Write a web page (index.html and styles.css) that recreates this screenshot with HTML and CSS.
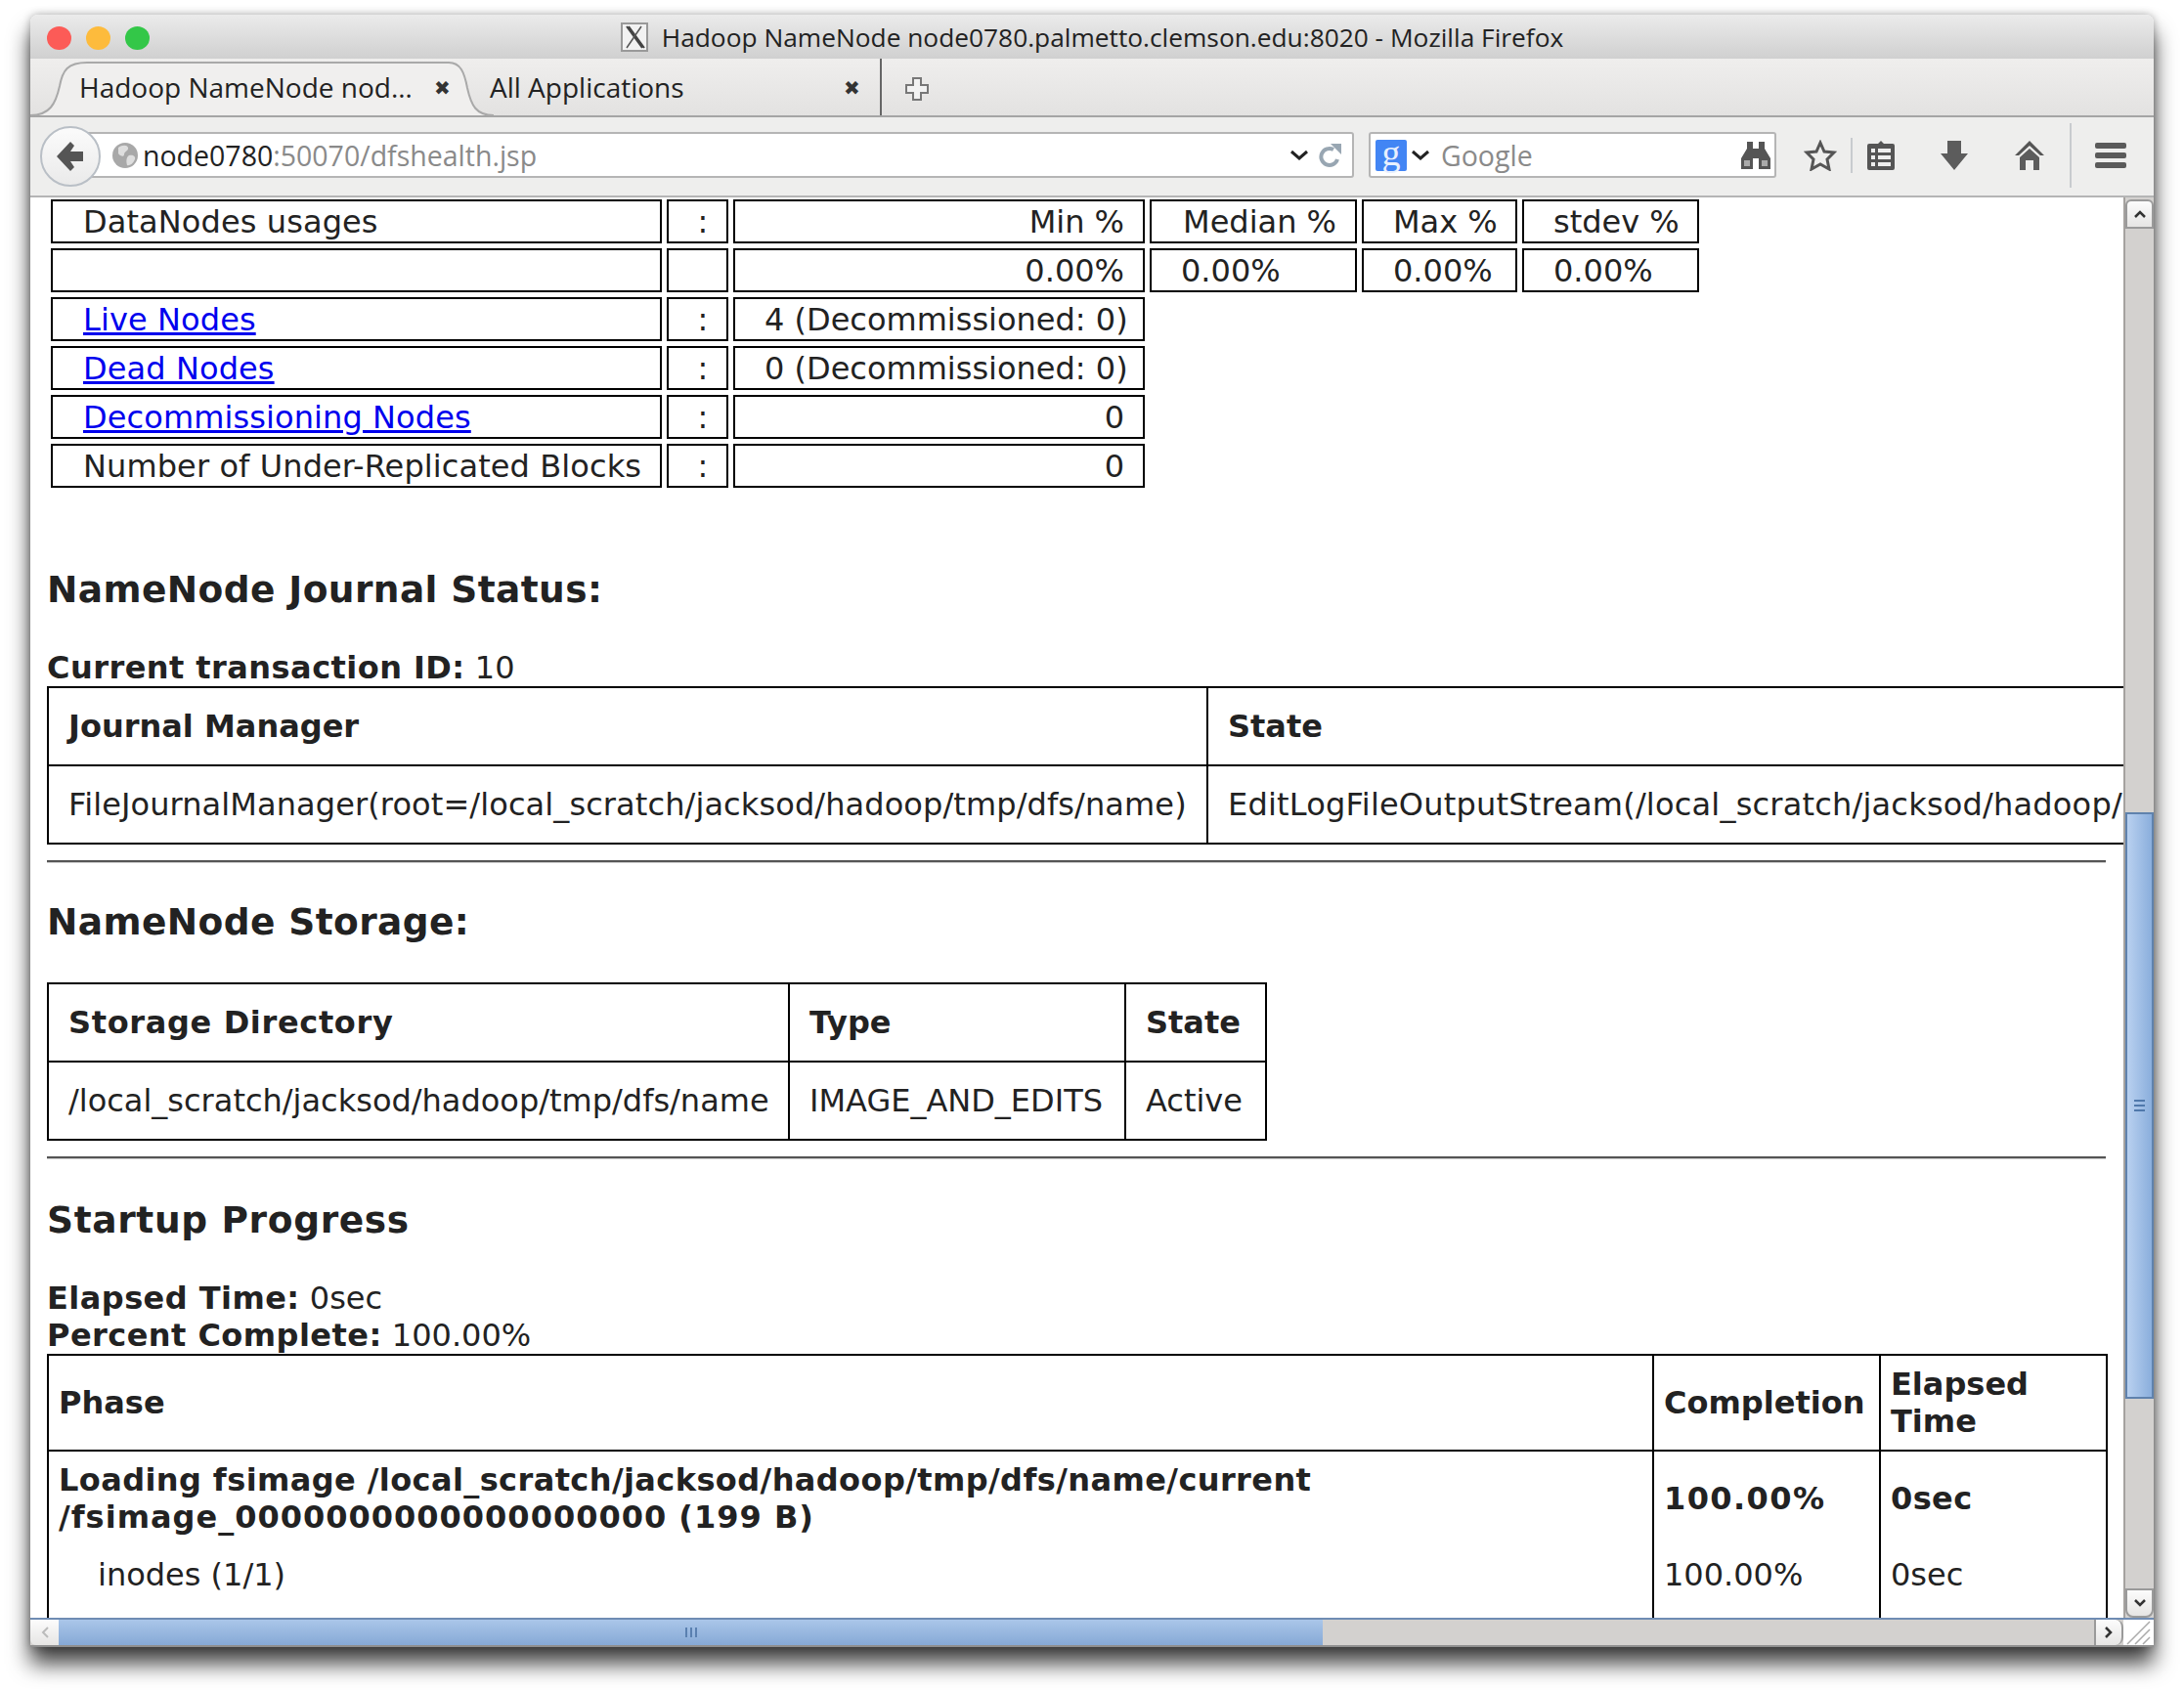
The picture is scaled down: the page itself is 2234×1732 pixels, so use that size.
FILE: index.html
```html
<!DOCTYPE html>
<html lang="en">
  <head>
    <meta charset="UTF-8" />
    <title>Hadoop NameNode node0780.palmetto.clemson.edu:8020 - Mozilla Firefox</title>
    <link rel="stylesheet" href="styles.css">
  </head>
  <body>
    <div class="window">
      <div class="titlebar">
        <div class="lights">
          <span class="light red"></span>
          <span class="light yellow"></span>
          <span class="light green"></span>
        </div>
        <svg class="x-icon" width="28" height="30" viewBox="0 0 28 30">
          <rect x="1" y="1" width="26" height="28" fill="#f2f2f2" stroke="#999" stroke-width="2" />
          <path d="M6 4 L22 26 M8 4 L24 26" stroke="#444" stroke-width="2" fill="none" />
          <path d="M21 4 L6 26" stroke="#555" stroke-width="1.5" fill="none" />
        </svg>
        <span class="title-text">Hadoop NameNode node0780.palmetto.clemson.edu:8020 - Mozilla Firefox</span>
      </div>

      <div class="tabbar">
        <div class="tab tab-active">
          <svg class="tab-bg" width="476" height="60" viewBox="0 0 476 60">
            <path d="M0 58 C20 58 26 46 30 28 C33 12 38 4 58 4 L428 4 C440 4 444 14 447 30 C451 48 456 58 474 58" fill="#f0efee" stroke="#a9a9a9" stroke-width="2" />
          </svg>
          <span class="tab-label">Hadoop NameNode nod…</span>
          <span class="tab-close">✖</span>
        </div>
        <div class="tab tab-other">
          <span class="tab-label">All Applications</span>
          <span class="tab-close">✖</span>
        </div>
        <svg class="new-tab" width="26" height="26" viewBox="0 0 26 26">
          <path d="M9 2 H17 V9 H24 V17 H17 V24 H9 V17 H2 V9 H9 Z" fill="#f2f2f2" stroke="#777" stroke-width="2" />
        </svg>
      </div>

      <div class="navbar">
        <div class="back-btn">
          <svg width="28" height="30" viewBox="0 0 28 30">
            <path d="M14 0 L0 15 L14 30 L18 26 L14 20 H27 V10 H14 L18 4 Z" fill="#555" />
          </svg>
        </div>
        <div class="urlbar">
          <svg class="globe" width="28" height="28" viewBox="0 0 28 28">
            <circle cx="14" cy="14" r="13" fill="#a8a8a8" />
            <path d="M7 6 C11 3 16 3 17 6 C18 9 13 10 13 13 C13 16 9 15 7 12 Z M18 14 C22 13 25 15 24 18 C22 23 18 25 16 24 C15 20 15 16 18 14 Z" fill="#dedede" />
          </svg>
          <span class="url-host">node0780</span><span class="url-rest">:50070/dfshealth.jsp</span>
          <svg class="chev chev-url" width="20" height="12" viewBox="0 0 20 12">
            <path d="M2 2 L10 9 L18 2" fill="none" stroke="#222" stroke-width="3" />
          </svg>
          <svg class="reload" width="24" height="26" viewBox="0 0 24 26">
            <path d="M19 17 A8.5 8.5 0 1 1 15 7" fill="none" stroke="#98a6b2" stroke-width="4" />
            <path d="M12 1 L23 1 L23 12 Z" fill="#98a6b2" />
          </svg>
        </div>
        <div class="searchbar">
          <span class="g-badge">g</span>
          <svg class="chev" width="20" height="12" viewBox="0 0 20 12">
            <path d="M2 2 L10 9 L18 2" fill="none" stroke="#222" stroke-width="3" />
          </svg>
          <span class="search-hint">Google</span>
          <svg class="binoculars" width="32" height="30" viewBox="0 0 32 30">
            <path d="M7 1 H13 V8 H19 V1 H25 V8 L31 18 V29 H19 V18 H13 V29 H1 V18 L7 8 Z" fill="#555" />
            <path d="M4 20 H10 V26 H4 Z M22 20 H28 V26 H22 Z" fill="#aaa" />
          </svg>
        </div>
        <div class="toolbar-icons">
          <svg class="star" width="34" height="32" viewBox="0 0 34 32">
            <path d="M17 3 L21 12 L31 13 L24 20 L26 30 L17 25 L8 30 L10 20 L3 13 L13 12 Z" fill="none" stroke="#555" stroke-width="3" />
          </svg>
          <span class="tool-sep"></span>
          <svg class="clip" width="30" height="32" viewBox="0 0 30 32">
            <path d="M12 4 L15 1 L18 4 H27 Q29 4 29 6 V29 Q29 31 27 31 H3 Q1 31 1 29 V6 Q1 4 3 4 Z" fill="#555" />
            <path d="M5 9 H9 V13 H5 Z M12 9 H25 V13 H12 Z M5 16 H9 V20 H5 Z M12 16 H25 V20 H12 Z M5 23 H9 V27 H5 Z M12 23 H25 V27 H12 Z" fill="#eee" />
          </svg>
          <svg class="down" width="30" height="32" viewBox="0 0 30 32">
            <path d="M8 1 H22 V14 H29 L15 31 L1 14 H8 Z" fill="#5c5c5c" />
          </svg>
          <svg class="home" width="32" height="32" viewBox="0 0 32 32">
            <path d="M16 1 L31 16 H27 L16 6 L5 16 H1 Z" fill="#555" />
            <path d="M16 9 L26 18 V31 H20 V21 H12 V31 H6 V18 Z" fill="#5c5c5c" />
          </svg>
          <span class="tool-sep tall"></span>
          <div class="menu-btn"><span></span><span></span><span></span></div>
        </div>
      </div>

      <div class="viewport">
        <div class="content">
          <table class="summary">
            <colgroup>
              <col class="c-label" /><col class="c-colon" /><col class="c-val" /><col class="c-med" /><col class="c-max" /><col class="c-std" />
            </colgroup>
            <tr>
              <td>DataNodes usages</td><td class="colon">:</td><td class="num">Min %</td><td class="num">Median %</td><td class="num">Max %</td><td class="num">stdev %</td>
            </tr>
            <tr>
              <td></td><td class="colon"></td><td class="num">0.00%</td><td>0.00%</td><td>0.00%</td><td>0.00%</td>
            </tr>
            <tr>
              <td><a href="#live">Live Nodes</a></td><td class="colon">:</td><td class="num">4 (Decommissioned: 0)</td>
            </tr>
            <tr>
              <td><a href="#dead">Dead Nodes</a></td><td class="colon">:</td><td class="num">0 (Decommissioned: 0)</td>
            </tr>
            <tr>
              <td><a href="#decom">Decommissioning Nodes</a></td><td class="colon">:</td><td class="num">0</td>
            </tr>
            <tr>
              <td>Number of Under-Replicated Blocks</td><td class="colon">:</td><td class="num">0</td>
            </tr>
          </table>

          <h3 class="journal-head">NameNode Journal Status:</h3>
          <div class="meta"><b>Current transaction ID:</b> 10</div>
          <table class="grid journal">
            <colgroup><col class="j-mgr" /><col class="j-state" /></colgroup>
            <tr><th>Journal Manager</th><th>State</th></tr>
            <tr>
              <td>FileJournalManager(root=/local_scratch/jacksod/hadoop/tmp/dfs/name)</td>
              <td>EditLogFileOutputStream(/local_scratch/jacksod/hadoop/</td>
            </tr>
          </table>
          <hr />

          <h3 class="storage-head">NameNode Storage:</h3>
          <table class="grid storage">
            <colgroup><col class="s-dir" /><col class="s-type" /><col class="s-state" /></colgroup>
            <tr><th class="wide">Storage Directory</th><th>Type</th><th>State</th></tr>
            <tr><td>/local_scratch/jacksod/hadoop/tmp/dfs/name</td><td>IMAGE_AND_EDITS</td><td>Active</td></tr>
          </table>
          <hr />

          <h3 class="startup-head">Startup Progress</h3>
          <div class="meta"><b>Elapsed Time:</b> 0sec</div>
          <div class="meta"><b>Percent Complete:</b> 100.00%</div>
          <table class="progress">
            <colgroup><col class="p-phase" /><col class="p-comp" /><col class="p-time" /></colgroup>
            <tr class="p-head"><th>Phase</th><th>Completion</th><th>Elapsed Time</th></tr>
            <tr class="p-phase-row">
              <td>Loading fsimage /local_scratch/jacksod/hadoop/tmp/dfs/name/current <span class="digits">/fsimage_0000000000000000000 (199 B)</span></td>
              <td><span class="digits">100.00%</span></td><td>0sec</td>
            </tr>
            <tr class="p-step"><td class="step-name">inodes (1/1)</td><td>100.00%</td><td>0sec</td></tr>
          </table>
        </div>

        <div class="vscroll">
          <div class="sb-btn sb-up">
            <svg width="14" height="10" viewBox="0 0 14 10"><path d="M2 8 L7 3 L12 8" fill="none" stroke="#333" stroke-width="2.5" /></svg>
          </div>
          <div class="vtrack">
            <div class="vthumb"><span></span><span></span><span></span></div>
          </div>
          <div class="sb-btn sb-down">
            <svg width="14" height="10" viewBox="0 0 14 10"><path d="M2 2 L7 7 L12 2" fill="none" stroke="#333" stroke-width="2.5" /></svg>
          </div>
        </div>
      </div>

      <div class="hscroll">
        <div class="sb-btn sb-left">
          <svg width="10" height="14" viewBox="0 0 10 14"><path d="M8 2 L3 7 L8 12" fill="none" stroke="#bbb" stroke-width="2" /></svg>
        </div>
        <div class="htrack">
          <div class="hthumb"><span></span><span></span><span></span></div>
        </div>
        <div class="sb-btn sb-right">
          <svg width="10" height="14" viewBox="0 0 10 14"><path d="M2 2 L7 7 L2 12" fill="none" stroke="#333" stroke-width="2.5" /></svg>
        </div>
        <div class="resizer">
          <svg width="28" height="26" viewBox="0 0 28 26"><path d="M4 25 L27 2 M12 25 L27 10 M20 25 L27 18" fill="none" stroke="#aaa" stroke-width="1.5" /></svg>
        </div>
      </div>
    </div>
  </body>
</html>
```

FILE: styles.css
```css
html,
body {
  height: 100%;
}
body {
  margin: 0;
  padding: 15px 0 0 31px;
  box-sizing: border-box;
  background-color: #fff;
  overflow: hidden;
  font-family: "DejaVu Sans", sans-serif;
  color: #222;
}
.window {
  width: 2172px;
  height: 1670px;
  display: flex;
  flex-direction: column;
  background: #fff;
  border-radius: 8px 8px 0 0;
  box-shadow: 0 17px 22px rgba(0, 0, 0, 0.75), 0 0 8px rgba(0, 0, 0, 0.3);
  overflow: hidden;
}

/* title bar */
.titlebar {
  height: 45px;
  flex: none;
  display: flex;
  align-items: center;
  justify-content: center;
  position: relative;
  background: linear-gradient(#ebebeb, #d0d0d0);
  font-family: "Open Sans", sans-serif;
  font-size: 26.3px;
  color: #222;
}
.lights {
  position: absolute;
  left: 17px;
  top: 12px;
  display: flex;
  gap: 15px;
}
.light {
  width: 25px;
  height: 24px;
  border-radius: 50%;
}
.red {
  background-color: #fc5b57;
}
.yellow {
  background-color: #fdbb3c;
}
.green {
  background-color: #33c748;
}
.x-icon {
  margin-right: 14px;
}

/* tabs */
.tabbar {
  height: 60px;
  flex: none;
  display: flex;
  align-items: center;
  background: linear-gradient(#efeeed, #e3e2e1);
  border-bottom: 2px solid #a5a5a5;
  box-sizing: border-box;
  font-family: "Open Sans", sans-serif;
  font-size: 28px;
  color: #222;
}
.tab {
  height: 100%;
  display: flex;
  align-items: center;
  box-sizing: border-box;
  position: relative;
}
.tab-active {
  width: 470px;
  padding: 0 40px 0 50px;
  justify-content: space-between;
}
.tab-bg {
  position: absolute;
  left: 0;
  top: 0;
}
.tab-label {
  position: relative;
}
.tab-close {
  position: relative;
  font-size: 20px;
  color: #333;
}
.tab-other {
  width: 401px;
  padding: 0 20px 0 0;
  justify-content: space-between;
  border-right: 2px solid #666;
}
.new-tab {
  margin: 3px 0 0 23px;
}

/* nav bar */
.navbar {
  height: 82px;
  flex: none;
  display: flex;
  align-items: center;
  padding: 0 0 3px 29px;
  background-color: #eeeeed;
  border-bottom: 2px solid #b5b5b5;
  box-sizing: border-box;
  font-family: "Open Sans", sans-serif;
  font-size: 28.5px;
  position: relative;
}
.back-btn {
  width: 62px;
  height: 62px;
  border-radius: 50%;
  background: linear-gradient(#fbfbfb, #eaeaea);
  border: 2px solid #b9bfc6;
  box-sizing: border-box;
  display: flex;
  align-items: center;
  justify-content: center;
  position: absolute;
  left: 10px;
  top: 9px;
  z-index: 1;
}
.urlbar,
.searchbar {
  height: 47px;
  display: flex;
  align-items: center;
  background-color: #fff;
  border: 2px solid #b5b5b5;
  box-sizing: border-box;
  border-radius: 0 3px 3px 0;
}
.urlbar {
  width: 1325px;
  padding: 0 10px 0 52px;
}
.globe {
  margin-right: 4px;
}
.url-host {
  color: #222;
}
.url-rest {
  color: #8a8a8a;
}
.chev-url {
  margin-left: auto;
  margin-right: 10px;
}
.searchbar {
  width: 417px;
  margin-left: 15px;
  padding: 0 3px 0 5px;
  border-radius: 3px;
}
.g-badge {
  width: 32px;
  height: 32px;
  background-color: #4285f4;
  border-radius: 2px;
  color: #e8f0fe;
  font-family: "Liberation Serif", serif;
  font-size: 38px;
  line-height: 26px;
  text-align: center;
  margin-right: 4px;
}
.search-hint {
  color: #8a8a8a;
  margin-left: 11px;
}
.binoculars {
  margin-left: auto;
}
.toolbar-icons {
  display: flex;
  align-items: center;
  margin-left: 28px;
}
.tool-sep {
  width: 2px;
  height: 36px;
  background-color: #c8cbcf;
  margin: 0 14px 0 14px;
}
.tool-sep.tall {
  height: 66px;
  margin: 0 24px 0 25px;
}
.down {
  margin-left: 45px;
}
.home {
  margin-left: 46px;
}
.menu-btn {
  display: flex;
  flex-direction: column;
  gap: 4px;
}
.menu-btn span {
  display: block;
  width: 32px;
  height: 6px;
  border-radius: 2px;
  background-color: #5a5a5a;
}

/* page area */
.viewport {
  flex: 1;
  min-height: 0;
  display: flex;
}
.content {
  flex: 1;
  min-width: 0;
  overflow: hidden;
  padding: 0 18px 0 17px;
  font-size: 32px;
  line-height: 38px;
}
a {
  color: #0000ee;
}
table {
  border-collapse: collapse;
  table-layout: fixed;
}
.summary {
  border-collapse: separate;
  border-spacing: 5px;
  margin: -3px 0 0 -1px;
  width: 1691px;
}
.c-label {
  width: 625px;
}
.c-colon {
  width: 63px;
}
.c-val {
  width: 421px;
}
.c-med {
  width: 212px;
}
.c-max {
  width: 159px;
}
.c-std {
  width: 181px;
}
.summary td {
  border: 2px solid #000;
  height: 45px;
  box-sizing: border-box;
  padding: 0 19px 0 30px;
  white-space: nowrap;
}
.summary td:first-child {
  padding-left: 31px;
  letter-spacing: 0.1px;
}
.summary .num {
  text-align: right;
}
.summary .colon {
  text-align: center;
  padding: 0 0 0 11px;
}
h3 {
  font-size: 37.5px;
  line-height: 44px;
  margin: 0;
  letter-spacing: 0.4px;
}
.journal-head {
  margin-top: 77px;
}
.meta {
  white-space: nowrap;
}
.meta b {
  letter-spacing: 0.45px;
}
.journal-head + .meta {
  margin-top: 39px;
}
.grid th,
.grid td {
  border: 2px solid #000;
  height: 80px;
  box-sizing: border-box;
  padding: 0 20px;
  text-align: left;
  white-space: nowrap;
}
.grid .wide {
  letter-spacing: 0.65px;
}
.journal {
  width: 2500px;
}
.journal td {
  letter-spacing: 0.1px;
}
.journal td + td {
  letter-spacing: 0.2px;
}
.j-mgr {
  width: 1186px;
}
.j-state {
  width: 1314px;
}
.storage {
  width: 1246px;
}
.s-dir {
  width: 758px;
}
.s-type {
  width: 344px;
}
.s-state {
  width: 144px;
}
hr {
  width: 2106px;
  margin: 16px 0 0;
  border: 0;
  border-top: 2px solid #555;
  border-bottom: 1px solid #ccc;
}
.storage-head {
  margin-top: 38px;
  margin-bottom: 40px;
}
.startup-head {
  margin-top: 40px;
  letter-spacing: 0.65px;
}
.startup-head + .meta {
  margin-top: 39px;
}
.progress {
  width: 2106px;
}
.p-phase {
  width: 1642px;
}
.p-comp {
  width: 232px;
}
.p-time {
  width: 232px;
}
.progress th,
.progress td {
  border-left: 2px solid #000;
  border-right: 2px solid #000;
  padding: 10px;
  text-align: left;
  vertical-align: middle;
}
.p-head th,
.p-phase-row td {
  border-top: 2px solid #000;
}
.p-phase-row td {
  font-weight: bold;
  letter-spacing: 0.4px;
}
.p-phase-row .digits {
  letter-spacing: 1px;
}
.p-phase-row td + td .digits {
  letter-spacing: 1.4px;
}
.p-step td {
  vertical-align: top;
  height: 160px;
  padding-top: 11px;
}
.progress .step-name {
  padding-left: 50px;
}

/* scrollbars */
.vscroll {
  width: 31px;
  flex: none;
  display: flex;
  flex-direction: column;
  padding-top: 2px;
  box-sizing: border-box;
  background-color: #d3d1cf;
  border-left: 2px solid #a5a29f;
}
.sb-btn {
  flex: none;
  display: flex;
  align-items: center;
  justify-content: center;
  background: linear-gradient(#fcfcfc, #e6e5e4);
  box-sizing: border-box;
  border: 2px solid #9a9a9a;
}
.sb-up {
  height: 30px;
  border-radius: 6px 6px 0 0;
}
.sb-down {
  height: 30px;
  border-radius: 0 0 8px 8px;
}
.vtrack {
  flex: 1;
  min-height: 0;
  padding-top: 597px;
}
.vthumb {
  height: 600px;
  box-sizing: border-box;
  background: linear-gradient(90deg, #b9d1f0, #8aaedc);
  border: 2px solid #5f82ad;
  display: flex;
  flex-direction: column;
  align-items: center;
  justify-content: center;
  gap: 3px;
}
.vthumb span {
  display: block;
  width: 11px;
  height: 2px;
  background-color: #4f78ab;
}
.hscroll {
  height: 30px;
  flex: none;
  display: flex;
  background-color: #d3d1cf;
  border-top: 2px solid #6f8cb3;
  border-bottom: 2px solid #8f8f8f;
  box-sizing: border-box;
}
.sb-left {
  width: 29px;
  border-radius: 0 0 0 6px;
  border: 0;
}
.sb-right {
  width: 30px;
  border-radius: 0 8px 8px 0;
  border-width: 0 2px 0 2px;
}
.htrack {
  flex: 1;
  min-width: 0;
}
.hthumb {
  width: 1293px;
  height: 100%;
  background: linear-gradient(#aac6e9, #86a9d6);
  display: flex;
  align-items: center;
  justify-content: center;
  gap: 3px;
}
.hthumb span {
  display: block;
  width: 2px;
  height: 10px;
  background-color: #5a80b0;
}
.resizer {
  width: 31px;
  flex: none;
  background-color: #fff;
  display: flex;
  align-items: flex-end;
}
```
